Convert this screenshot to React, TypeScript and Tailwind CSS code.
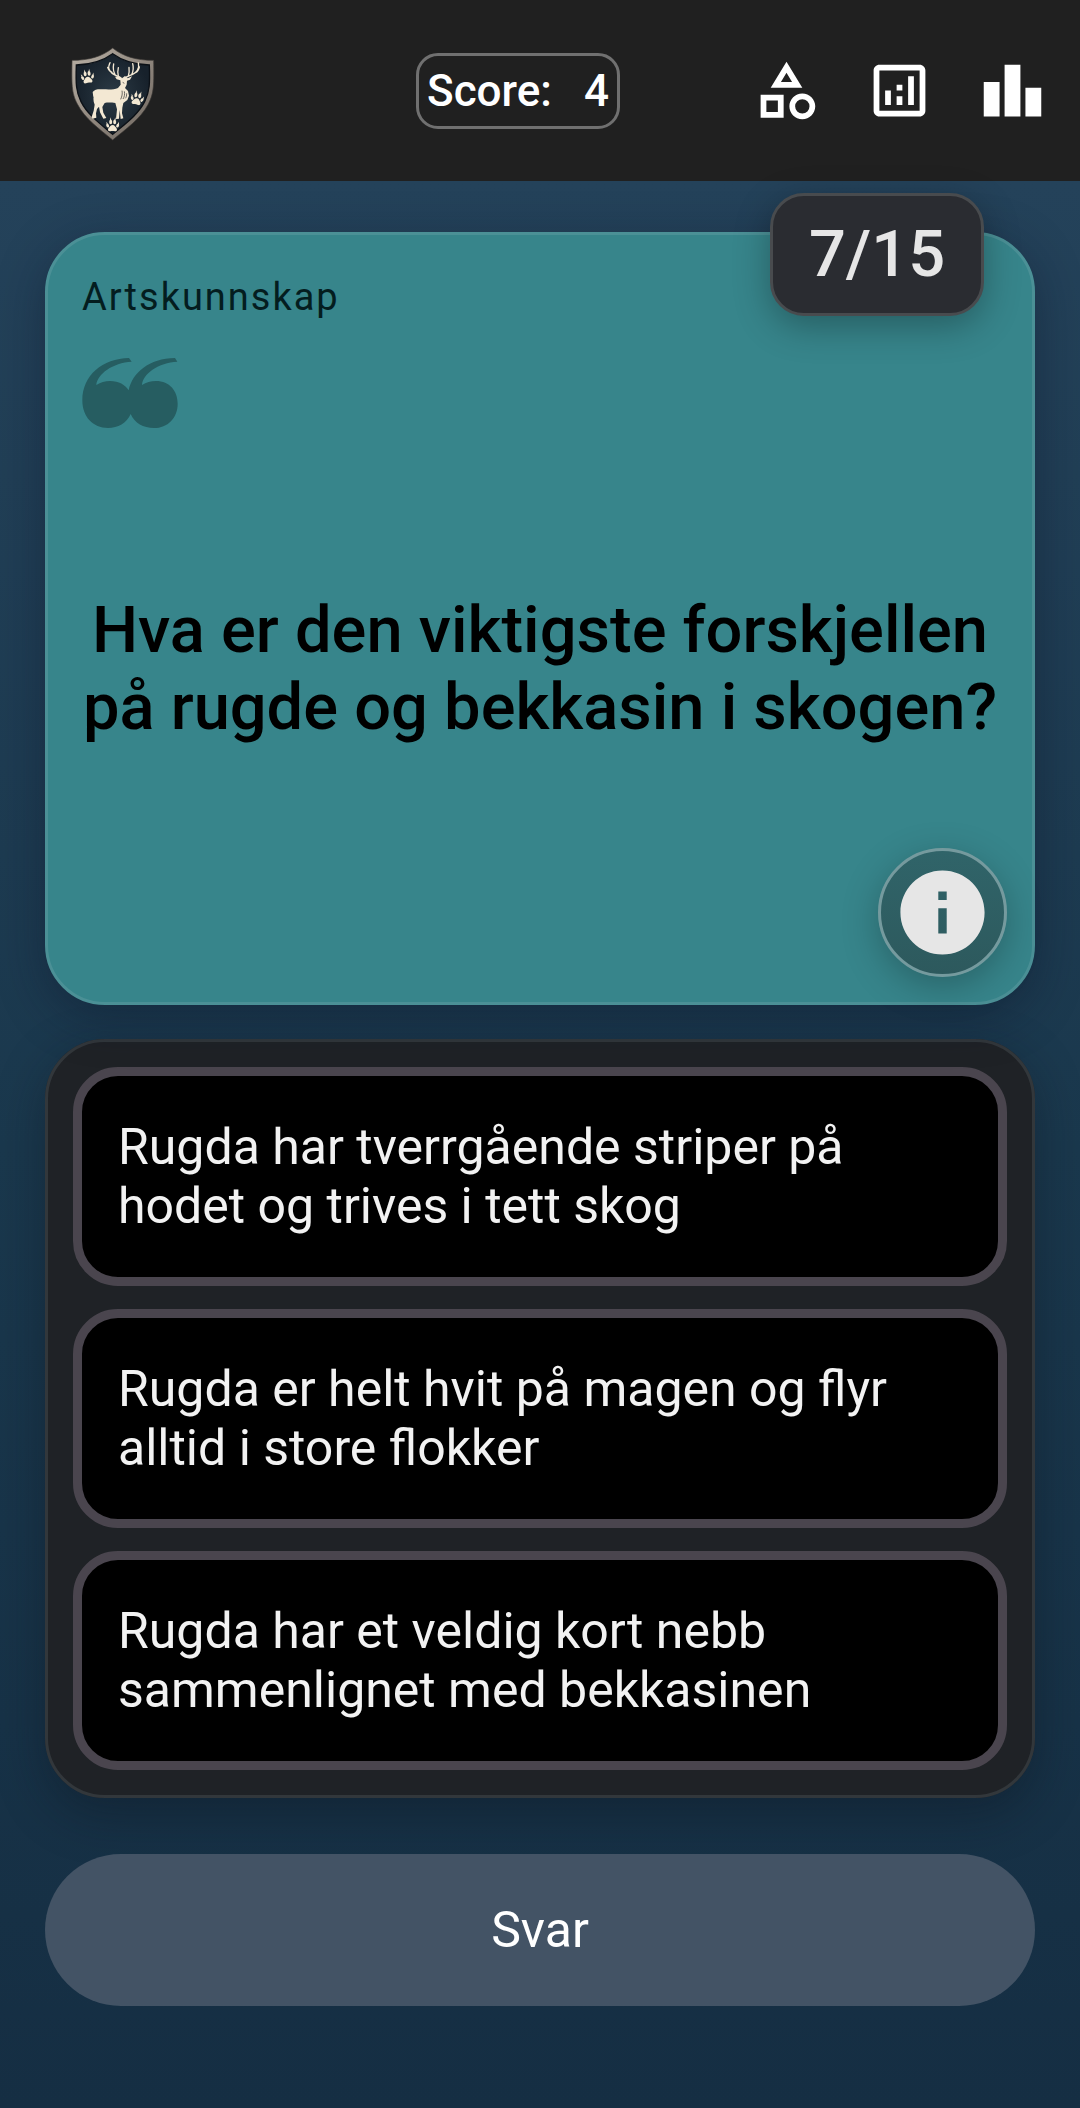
import { FC } from 'react';
import { MdInfo, MdLeaderboard, MdOutlineAnalytics, MdOutlineCategory } from 'react-icons/md';

const Paw: FC<{ x: number; y: number; rotate: number }> = ({ x, y, rotate }) => (
	<g transform={`translate(${x} ${y}) rotate(${rotate})`}>
		<path d="M0 -3c6 0 8 6 11 9s3 11-4 10c-3-1-11-1-14 0-7 1-9-6-5-10s6-9 12-9z" />
		<ellipse cx="-15" cy="-1" rx="4" ry="6" transform="rotate(-25 -15 -1)" />
		<ellipse cx="-6" cy="-12" rx="4.5" ry="7" />
		<ellipse cx="6" cy="-12" rx="4.5" ry="7" />
		<ellipse cx="15" cy="-1" rx="4" ry="6" transform="rotate(25 15 -1)" />
		<path d="M-8-18l1-8 3 8zM5-18l3-8 1 8zM-18-6l-1-7 5 6zM15-6l4-7 0 8z" />
	</g>
);

const ShieldLogo: FC = () => (
	<svg viewBox="93 33 252 300" className="h-[100px] w-[84px]" role="img" aria-label="Logo">
		<defs>
			<linearGradient id="rim" x1="0" y1="0" x2="1" y2="1">
				<stop offset="0" stopColor="#b9b1a6" />
				<stop offset="0.5" stopColor="#91887f" />
				<stop offset="1" stopColor="#6d655e" />
			</linearGradient>
			<radialGradient id="field">
				<stop offset="0" stopColor="#2b3a45" />
				<stop offset="1" stopColor="#17212b" />
			</radialGradient>
		</defs>
		<path
			d="M218 54C186 80 146 91 96 91C95 160 94 188 112 222C134 266 180 298 218 330C256 298 303 266 325 222C343 188 342 160 341 91C290 91 250 80 218 54Z"
			fill="url(#rim)"
			stroke="#3a3633"
			strokeWidth="2"
		/>
		<path
			d="M218 71C187 94 150 103 109 105C107 160 108 185 123 215C143 255 184 284 218 313C252 284 294 255 314 215C329 185 330 160 328 105C286 103 249 94 218 71Z"
			fill="url(#field)"
			stroke="#0b1016"
			strokeWidth="4"
		/>
		<g fill="#f3e8d3">
			<Paw x={143} y={143} rotate={-8} />
			<Paw x={291} y={208} rotate={12} />
			<Paw x={218} y={288} rotate={0} />
			<path d="M225 140L237 139L246 145L255 138L263 145L276 139L270 149L261 152L260 164L255 174L264 183L267 197L262 210L250 219L247 233L246 250L250 265L242 267L239 240L237 266L228 267L231 238L226 219C212 217 202 217 194 219L187 231L190 248L199 264L190 266L180 247L177 230L171 237L168 250L169 263L158 266L155 261L161 242L164 224C159 213 159 199 164 190L160 202L158 186C164 177 177 177 190 178C207 179 223 179 234 174L242 164L241 151L230 148Z" />
		</g>
		<g fill="none" stroke="#f3e8d3" strokeWidth="4" strokeLinecap="round">
			<path d="M243 144C236 137 214 137 207 117C204 108 208 103 210 98M216 127C207 124 205 118 203 112M225 134C220 124 219 112 221 102M235 138C232 130 233 122 235 113" />
			<path d="M256 144C262 136 285 136 293 119C298 109 296 104 295 99M286 128C295 124 297 116 298 111M275 134C281 122 281 112 278 101M265 138C268 130 268 121 267 112" />
		</g>
		<path
			d="M246 182c2 9 0 17-4 26M253 184c2 8 0 17-4 23M260 190c0 7-1 12-4 15M248 157l5 3"
			fill="none"
			stroke="#2a2c2d"
			strokeWidth="2"
		/>
	</svg>
);

const QuoteMark: FC = () => (
	<svg viewBox="0 0 288 210" className="h-[70px] w-24 fill-[#265d61]" aria-hidden="true">
		<path d="M141 0L149 11C92 14 46 48 43 81C56 73 69 69 84 69C111 69 129 80 140 97C151 44 202 1 279 0L286 11C229 14 183 47 180 81C193 73 206 69 222 69C263 69 287 99 287 137C287 180 257 210 216 210C184 210 158 195 146 168C134 195 108 210 78 210C33 210 1 177 1 127C1 52 62 1 141 0Z" />
	</svg>
);

const Header: FC = () => (
	<header className="flex h-[181px] items-center bg-[#202020] pr-[33px] pl-[71px] text-white">
		<ShieldLogo />
		<div className="mr-[132px] ml-auto flex h-[76px] w-[204px] items-center justify-between rounded-[22px] border-3 border-[#707070] px-2 text-[44px] font-medium">
			<span>Score:</span>
			<span>4</span>
		</div>
		<nav className="flex gap-11">
			{navItems.map(({ label, Icon }) => (
				<button key={label} type="button" aria-label={label}>
					<Icon className="size-[69px]" />
				</button>
			))}
		</nav>
	</header>
);

const QuestionCard: FC = () => (
	<section className="relative flex flex-1 flex-col rounded-[60px] border-3 border-[#4b9096] bg-[#37858b] px-[34px] pt-9 shadow-[0_12px_48px_rgba(12,20,40,0.4)]">
		<p className="text-[38px] leading-[52px] tracking-[2px] text-[#041d1f]">Artskunnskap</p>
		<div className="mt-[35px]">
			<QuoteMark />
		</div>
		<h1 className="mt-[164px] text-center text-[65px] leading-[77px] font-medium text-black">
			Hva er den viktigste forskjellen på rugde og bekkasin i skogen?
		</h1>
		<div className="absolute -top-[42px] right-12 flex h-[123px] w-[214px] items-center justify-center rounded-[34px] border-3 border-[#484b4e] bg-[#2a2c31] text-[65px] font-medium text-[#e6e6e6] shadow-[0_10px_36px_rgba(0,0,0,0.3)]">
			7/15
		</div>
		<button
			type="button"
			aria-label="Info"
			className="absolute right-[25px] bottom-[25px] flex size-[129px] items-center justify-center rounded-full border-3 border-[#759a9e] bg-linear-to-b from-[#306469] to-[#2d595d] text-[#e6e6e6] shadow-[0_10px_36px_rgba(0,0,0,0.25)]"
		>
			<MdInfo className="size-[101px] shrink-0" />
		</button>
	</section>
);

const Answers: FC = () => (
	<fieldset className="mt-[34px] flex flex-col gap-[23px] rounded-[60px] border-3 border-[#32373b] bg-[#1f2226] p-[25px] shadow-[0_16px_48px_rgba(12,20,30,0.4)]">
		{answers.map((answer) => (
			<label
				key={answer}
				className="flex h-[219px] cursor-pointer items-center rounded-[45px] border-9 border-[#4a454e] bg-black px-9 text-[50px] leading-[59px] text-[#f2f2f2]"
			>
				<input type="radio" name="answer" value={answer} className="sr-only" />
				<span>{answer}</span>
			</label>
		))}
	</fieldset>
);

const App: FC = () => (
	<div className="flex min-h-screen flex-col bg-[#152e43] font-['Roboto',sans-serif]">
		<Header />
		<main className="flex flex-1 flex-col bg-linear-to-b from-[#24425a] via-[#1a384d] to-[#152e43] px-[45px] pt-[51px] pb-[102px]">
			<QuestionCard />
			<Answers />
			<button
				type="button"
				className="mt-14 h-[152px] rounded-full bg-[#435365] text-[50px] text-white"
			>
				Svar
			</button>
		</main>
	</div>
);

const navItems = [
	{ label: 'Kategorier', Icon: MdOutlineCategory },
	{ label: 'Statistikk', Icon: MdOutlineAnalytics },
	{ label: 'Toppliste', Icon: MdLeaderboard }
];

const answers = [
	'Rugda har tverrgående striper på hodet og trives i tett skog',
	'Rugda er helt hvit på magen og flyr alltid i store flokker',
	'Rugda har et veldig kort nebb sammenlignet med bekkasinen'
];

export default App;
